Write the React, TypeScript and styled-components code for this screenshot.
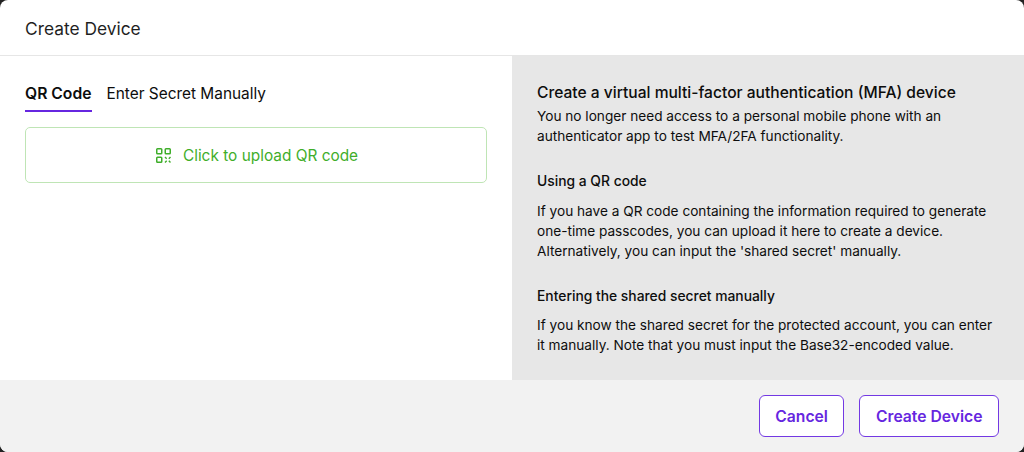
import styled, { createGlobalStyle } from "styled-components";

const GlobalStyle = createGlobalStyle`
  html, body {
    margin: 0;
    padding: 0;
    background: #222;
  }
  * {
    box-sizing: border-box;
  }
`;

function QrIcon() {
  return (
    <svg width="15" height="15" viewBox="0 0 15 15" fill="none" stroke="currentColor" strokeWidth="1.5">
      <rect x="0.75" y="0.75" width="5" height="5" rx="0.8" />
      <rect x="9.25" y="0.75" width="5" height="5" rx="0.8" />
      <rect x="0.75" y="9.25" width="5" height="5" rx="0.8" />
      <path d="M9 9l1.7 1.7M14.5 9l-1.7 1.7M9 14.5l1.7-1.7M14.5 14.5l-1.7-1.7" strokeWidth="1.4" />
    </svg>
  );
}

export default function App() {
  return (
    <>
      <GlobalStyle />
      <Modal>
        <Header>Create Device</Header>
        <Body>
          <LeftPane>
            <Tabs>
              <Tab active>QR Code</Tab>
              <Tab>Enter Secret Manually</Tab>
            </Tabs>
            <UploadButton>
              <QrIcon />
              Click to upload QR code
            </UploadButton>
          </LeftPane>
          <HelpPane>
            <HelpTitle>Create a virtual multi-factor authentication (MFA) device</HelpTitle>
            <HelpText>
              You no longer need access to a personal mobile phone with an
              <br />
              authenticator app to test MFA/2FA functionality.
            </HelpText>
            <HelpHeading>Using a QR code</HelpHeading>
            <HelpText>
              If you have a QR code containing the information required to generate
              <br />
              one-time passcodes, you can upload it here to create a device.
              <br />
              Alternatively, you can input the 'shared secret' manually.
            </HelpText>
            <HelpHeading tight>Entering the shared secret manually</HelpHeading>
            <HelpText>
              If you know the shared secret for the protected account, you can enter
              <br />
              it manually. Note that you must input the Base32-encoded value.
            </HelpText>
          </HelpPane>
        </Body>
        <Footer>
          <FooterButton>Cancel</FooterButton>
          <FooterButton>Create Device</FooterButton>
        </Footer>
      </Modal>
    </>
  );
}

const Modal = styled.div`
  width: 1024px;
  height: 452px;
  display: flex;
  flex-direction: column;
  overflow: hidden;
  border-radius: 8px;
  background: #fff;
  color: #0d0d0d;
  font-family: Inter, "Liberation Sans", sans-serif;
`;

const Header = styled.div`
  height: 56px;
  flex: none;
  display: flex;
  align-items: center;
  padding: 2px 25px 0;
  border-bottom: 1px solid #e6e6e6;
  font-size: 17.35px;
  font-weight: 400;
  color: #1f1f1f;
`;

const Body = styled.div`
  flex: 1;
  display: flex;
  min-height: 0;
`;

const LeftPane = styled.div`
  width: 512px;
  padding: 25px;
`;

const Tabs = styled.div`
  display: flex;
  gap: 15px;
  margin-bottom: 15px;
`;

const Tab = styled.div<{ active?: boolean }>`
  height: 31px;
  padding-top: 4px;
  font-size: ${({ active }) => (active ? "15.7px" : "15.4px")};
  line-height: 18px;
  color: #0d0d0d;
  font-weight: ${({ active }) => (active ? 600 : 400)};
  border-bottom: 2px solid ${({ active }) => (active ? "#6626e0" : "transparent")};
`;

const UploadButton = styled.div`
  width: 462px;
  height: 56px;
  display: flex;
  align-items: center;
  justify-content: center;
  gap: 12px;
  padding-left: 2px;
  border: 1px solid #bfe5b5;
  border-radius: 5px;
  color: #3fae2a;
  font-size: 15.4px;
`;

const HelpPane = styled.div`
  width: 512px;
  padding: 27px 25px 0;
  background: #e7e7e7;
  color: #0d0d0d;
`;

const HelpTitle = styled.div`
  font-size: 15.6px;
  line-height: 20px;
  font-weight: 500;
  margin-bottom: 3px;
`;

const HelpText = styled.div`
  font-size: 13.65px;
  line-height: 20px;
`;

const HelpHeading = styled.div<{ tight?: boolean }>`
  font-size: 13.85px;
  line-height: 20px;
  font-weight: 500;
  margin: 25px 0 ${({ tight }) => (tight ? "9px" : "10px")};
`;

const Footer = styled.div`
  height: 72px;
  flex: none;
  display: flex;
  align-items: center;
  justify-content: flex-end;
  gap: 15px;
  padding: 0 25px;
  background: #f2f2f2;
`;

const FooterButton = styled.button`
  height: 42px;
  padding: 0 15.5px;
  background: #fff;
  border: 1px solid #7339e3;
  border-radius: 6px;
  color: #6626e0;
  font-family: inherit;
  font-size: 15.7px;
  font-weight: 600;
`;
